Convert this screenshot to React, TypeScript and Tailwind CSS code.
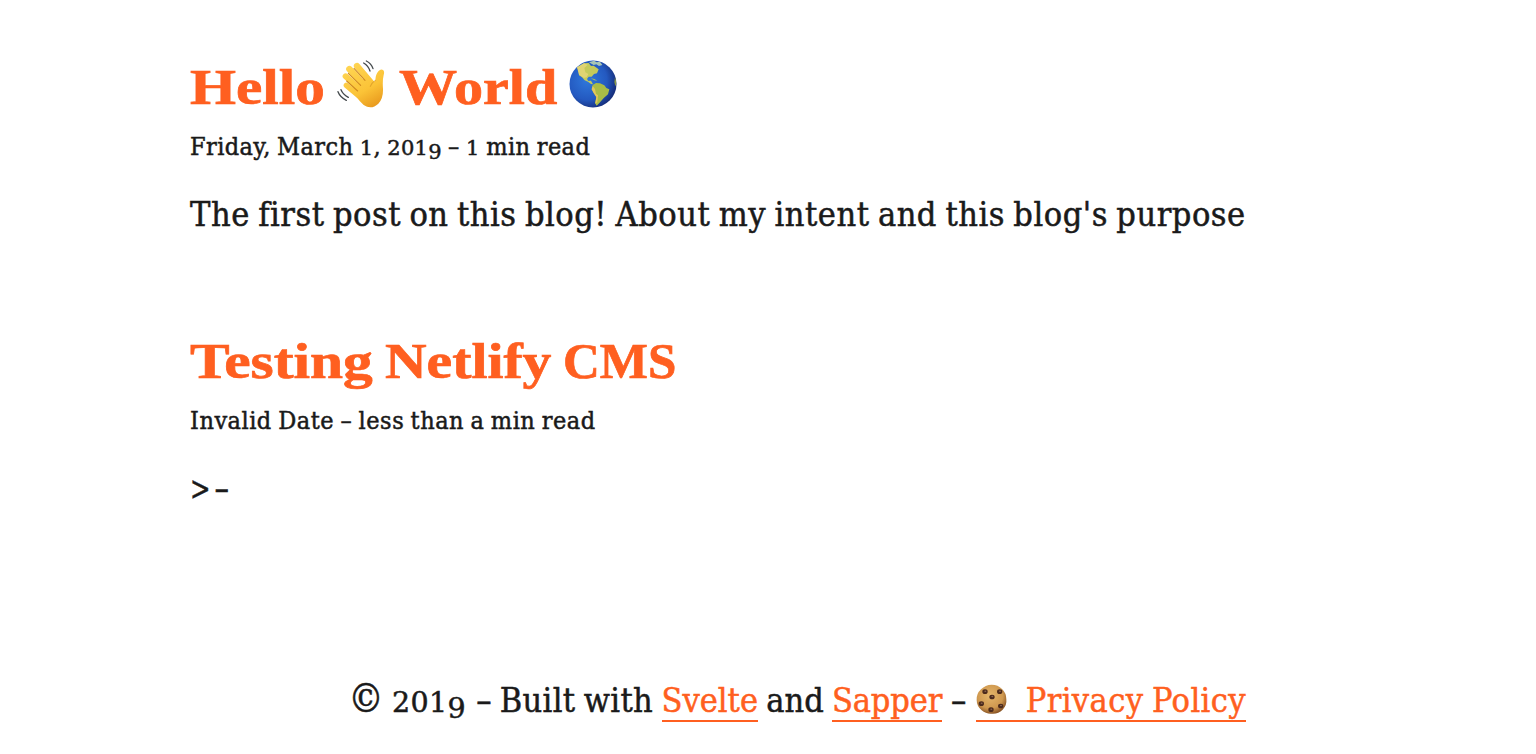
import type { ReactNode } from "react";

function WavingHand() {
  return (
    <svg viewBox="21 15 144 144" className="block size-12" role="img" aria-label="waving hand">
      <defs>
        <linearGradient id="skin" gradientUnits="userSpaceOnUse" x1="60" y1="30" x2="135" y2="157">
          <stop offset="0" stopColor="#ffd552" />
          <stop offset="0.6" stopColor="#fbc337" />
          <stop offset="1" stopColor="#e8981d" />
        </linearGradient>
      </defs>
      <g stroke="url(#skin)" strokeLinecap="round" fill="none">
        <path d="M49 91 L92 127" strokeWidth="16" />
        <path d="M47 64 L100 112" strokeWidth="18" />
        <path d="M58 42 L110 98" strokeWidth="19" />
        <path d="M81 33 L124 84" strokeWidth="19" />
      </g>
      <path
        d="M70 98 L98 72 L119 76 Q132 86 136 75 Q137 58 145 49 Q153 40 160 46 Q164 50 161 60 Q157 76 159 102 Q160 130 145 146 Q124 166 101 150 Q88 139 76 121 Z"
        fill="url(#skin)"
      />
      <g stroke="#d08a20" strokeWidth="3.2" strokeLinecap="round" fill="none">
        <path d="M72 40 L105 76" />
        <path d="M55 55 L92 91" />
        <path d="M50 78 L83 108" />
        <path d="M136 76 Q126 82 121 94" opacity="0.55" />
      </g>
      <g stroke="#454a4d" strokeWidth="4" strokeLinecap="round" fill="none">
        <path d="M109 18 Q124 25 129 41" />
        <path d="M101 24 Q115 32 120 48" />
        <path d="M33 104 Q38 117 55 127" />
        <path d="M24 110 Q30 126 49 136" />
      </g>
    </svg>
  );
}

function Globe() {
  return (
    <svg viewBox="19 18 144 144" className="block size-12" role="img" aria-label="globe">
      <defs>
        <radialGradient id="sea" cx="0.38" cy="0.42" r="0.64">
          <stop offset="0" stopColor="#2f78dc" />
          <stop offset="0.65" stopColor="#2459c0" />
          <stop offset="1" stopColor="#152c78" />
        </radialGradient>
        <clipPath id="disc"><circle cx="91" cy="90" r="70" /></clipPath>
      </defs>
      <circle cx="91" cy="90" r="70.5" fill="url(#sea)" />
      <g clipPath="url(#disc)">
        <path d="M43 40 L64 28 L78 27 L85 36 L93 35 L108 46 L103 58 L94 60 L87 68 L78 68 L73 75 L77 81 L85 80 L91 91 L85 90 L76 83 L66 79 L58 70 L49 64 L48 50 Z" fill="#c5ca5b" />
        <path d="M43 40 L64 28 L75 32 L65 42 L68 55 L77 60 L72 70 L64 72 L49 62 Z" fill="#e0d473" />
        <path d="M79 25 L94 20 L102 25 L112 23 L119 33 L109 36 L101 31 L93 33 Z" fill="#a9c6b4" />
        <path d="M84 73 L95 75 L104 80 L95 79 Z" fill="#a8bd66" />
        <path d="M90 93 L100 87 L112 88 L125 94 L131 102 L140 106 L136 121 L124 131 L110 147 L102 155 L97 147 L101 129 L93 117 L87 106 Z" fill="#a9bc47" />
        <path d="M90 96 L97 105 L100 119 L106 124 L104 145 L98 149 L101 129 L93 117 L87 106 Z" fill="#e4c65c" />
        <path d="M157 70 L163 86 L158 97 L155 84 Z" fill="#879747" />
      </g>
    </svg>
  );
}

const chips = [[39, 37], [83, 37], [60, 53], [28, 73], [86, 80], [57, 91]];

function Cookie() {
  return (
    <svg viewBox="12 12 96 96" className="mr-px inline-block size-8 align-[-4px]" role="img" aria-label="cookie">
      <defs>
        <radialGradient id="dough" cx="0.45" cy="0.38" r="0.62">
          <stop offset="0" stopColor="#e5b66b" />
          <stop offset="0.7" stopColor="#cf984f" />
          <stop offset="1" stopColor="#8d5827" />
        </radialGradient>
      </defs>
      <path d="M59 14 Q78 14 90 27 Q103 39 103 58 Q105 76 92 89 Q79 102 61 101 Q43 103 29 91 Q14 78 14 60 Q13 41 27 28 Q40 14 59 14 Z" fill="url(#dough)" />
      {chips.map(([x, y]) => (
        <g key={`${x}-${y}`} transform={`translate(${x} ${y - 2})`}>
          <ellipse rx="8" ry="7" fill="#4b2a1c" />
          <ellipse cx="1" cy="-1.5" rx="3" ry="2.3" fill="#8a6350" />
        </g>
      ))}
    </svg>
  );
}

const digit = "font-['DejaVu_Serif',serif] text-[0.84em] leading-none [-webkit-text-stroke:0.5px]";

function Old({ children }: { children: ReactNode }) {
  return <span className={digit}>{children}</span>;
}

function Year() {
  return (
    <span className="tracking-[0.01em]">
      <Old>201</Old><span className="align-[-0.17em]"><Old>9</Old></span>
    </span>
  );
}

function FooterLink({ children }: { children: ReactNode }) {
  return <a href="#" className="border-b-2 border-[#ff5f20] text-[#ff5f20]">{children}</a>;
}

const title = "flex h-[60px] items-start whitespace-nowrap font-['Liberation_Serif',serif] text-[51px] leading-[60px] font-bold text-[#ff5f20] [-webkit-text-stroke:0.7px_#ff5f20]";
const meta = "mt-2.5 h-10 whitespace-pre text-[25px] leading-10 [word-spacing:-1.2px]";
const body = "mt-[22px] h-[50px] whitespace-pre text-[34px] leading-[50px] tracking-[0.52px] [word-spacing:-1.8px]";

export default function App() {
  return (
    <div className="h-[754px] overflow-hidden bg-white pt-[57px] font-['DejaVu_Serif_Condensed','DejaVu_Serif',serif] text-[#1a1a1a] [-webkit-text-stroke:0.5px]">
      <main className="ml-[190px] w-[1058px]">
        <article>
          <h2 className={title}>
            <span className="w-[147px]"><span className="inline-block origin-left scale-x-[1.16]">Hello</span></span>
            <span className="mt-[3px] w-[62px]"><WavingHand /></span>
            <span className="w-[170px]"><span className="inline-block origin-left scale-x-[1.14]">World</span></span>
            <span className="mt-[3px]"><Globe /></span>
          </h2>
          <p className={meta}><span className="tracking-[0.4px]">Friday, March <Old>1</Old>, <Year /> – <Old>1</Old> min read</span></p>
          <p className={body}>The first post on this blog! About my intent and this blog's purpose</p>
        </article>
        <article className="mt-[92px]">
          <h2 className={title}>
            <span className="w-[195px]"><span className="inline-block origin-left scale-x-[1.165]">Testing</span></span>
            <span className="w-[178px]"><span className="inline-block origin-left scale-x-[1.13]">Netlify</span></span>
            <span>CMS</span>
          </h2>
          <p className={meta}><span className="tracking-[0.5px]">Invalid Date – less than a min read</span></p>
          <p className={body}><span className="inline-block w-[23.5px]"><span className="inline-block origin-left scale-x-[0.8]">&gt;</span></span><span className="inline-block origin-left scale-x-[1.5]">-</span></p>
        </article>
        <footer className="mt-[162px] h-[54px] w-[1056px] text-right text-[34px] leading-[50px] whitespace-pre [word-spacing:-1.5px]">
          <span className="text-[1.16em] leading-none">©</span> <span className="mr-0.5"><Year /></span>{" – "}<span className="tracking-[0.3px]">Built with </span><FooterLink>Svelte</FooterLink>{" and "}<FooterLink><span className="tracking-[-0.15px]">Sapper</span></FooterLink><span className="tracking-[0.8px]">{" – "}</span><FooterLink><Cookie />{"  "}<span className="tracking-[0.4px]">Privacy Policy</span></FooterLink>
        </footer>
      </main>
    </div>
  );
}
